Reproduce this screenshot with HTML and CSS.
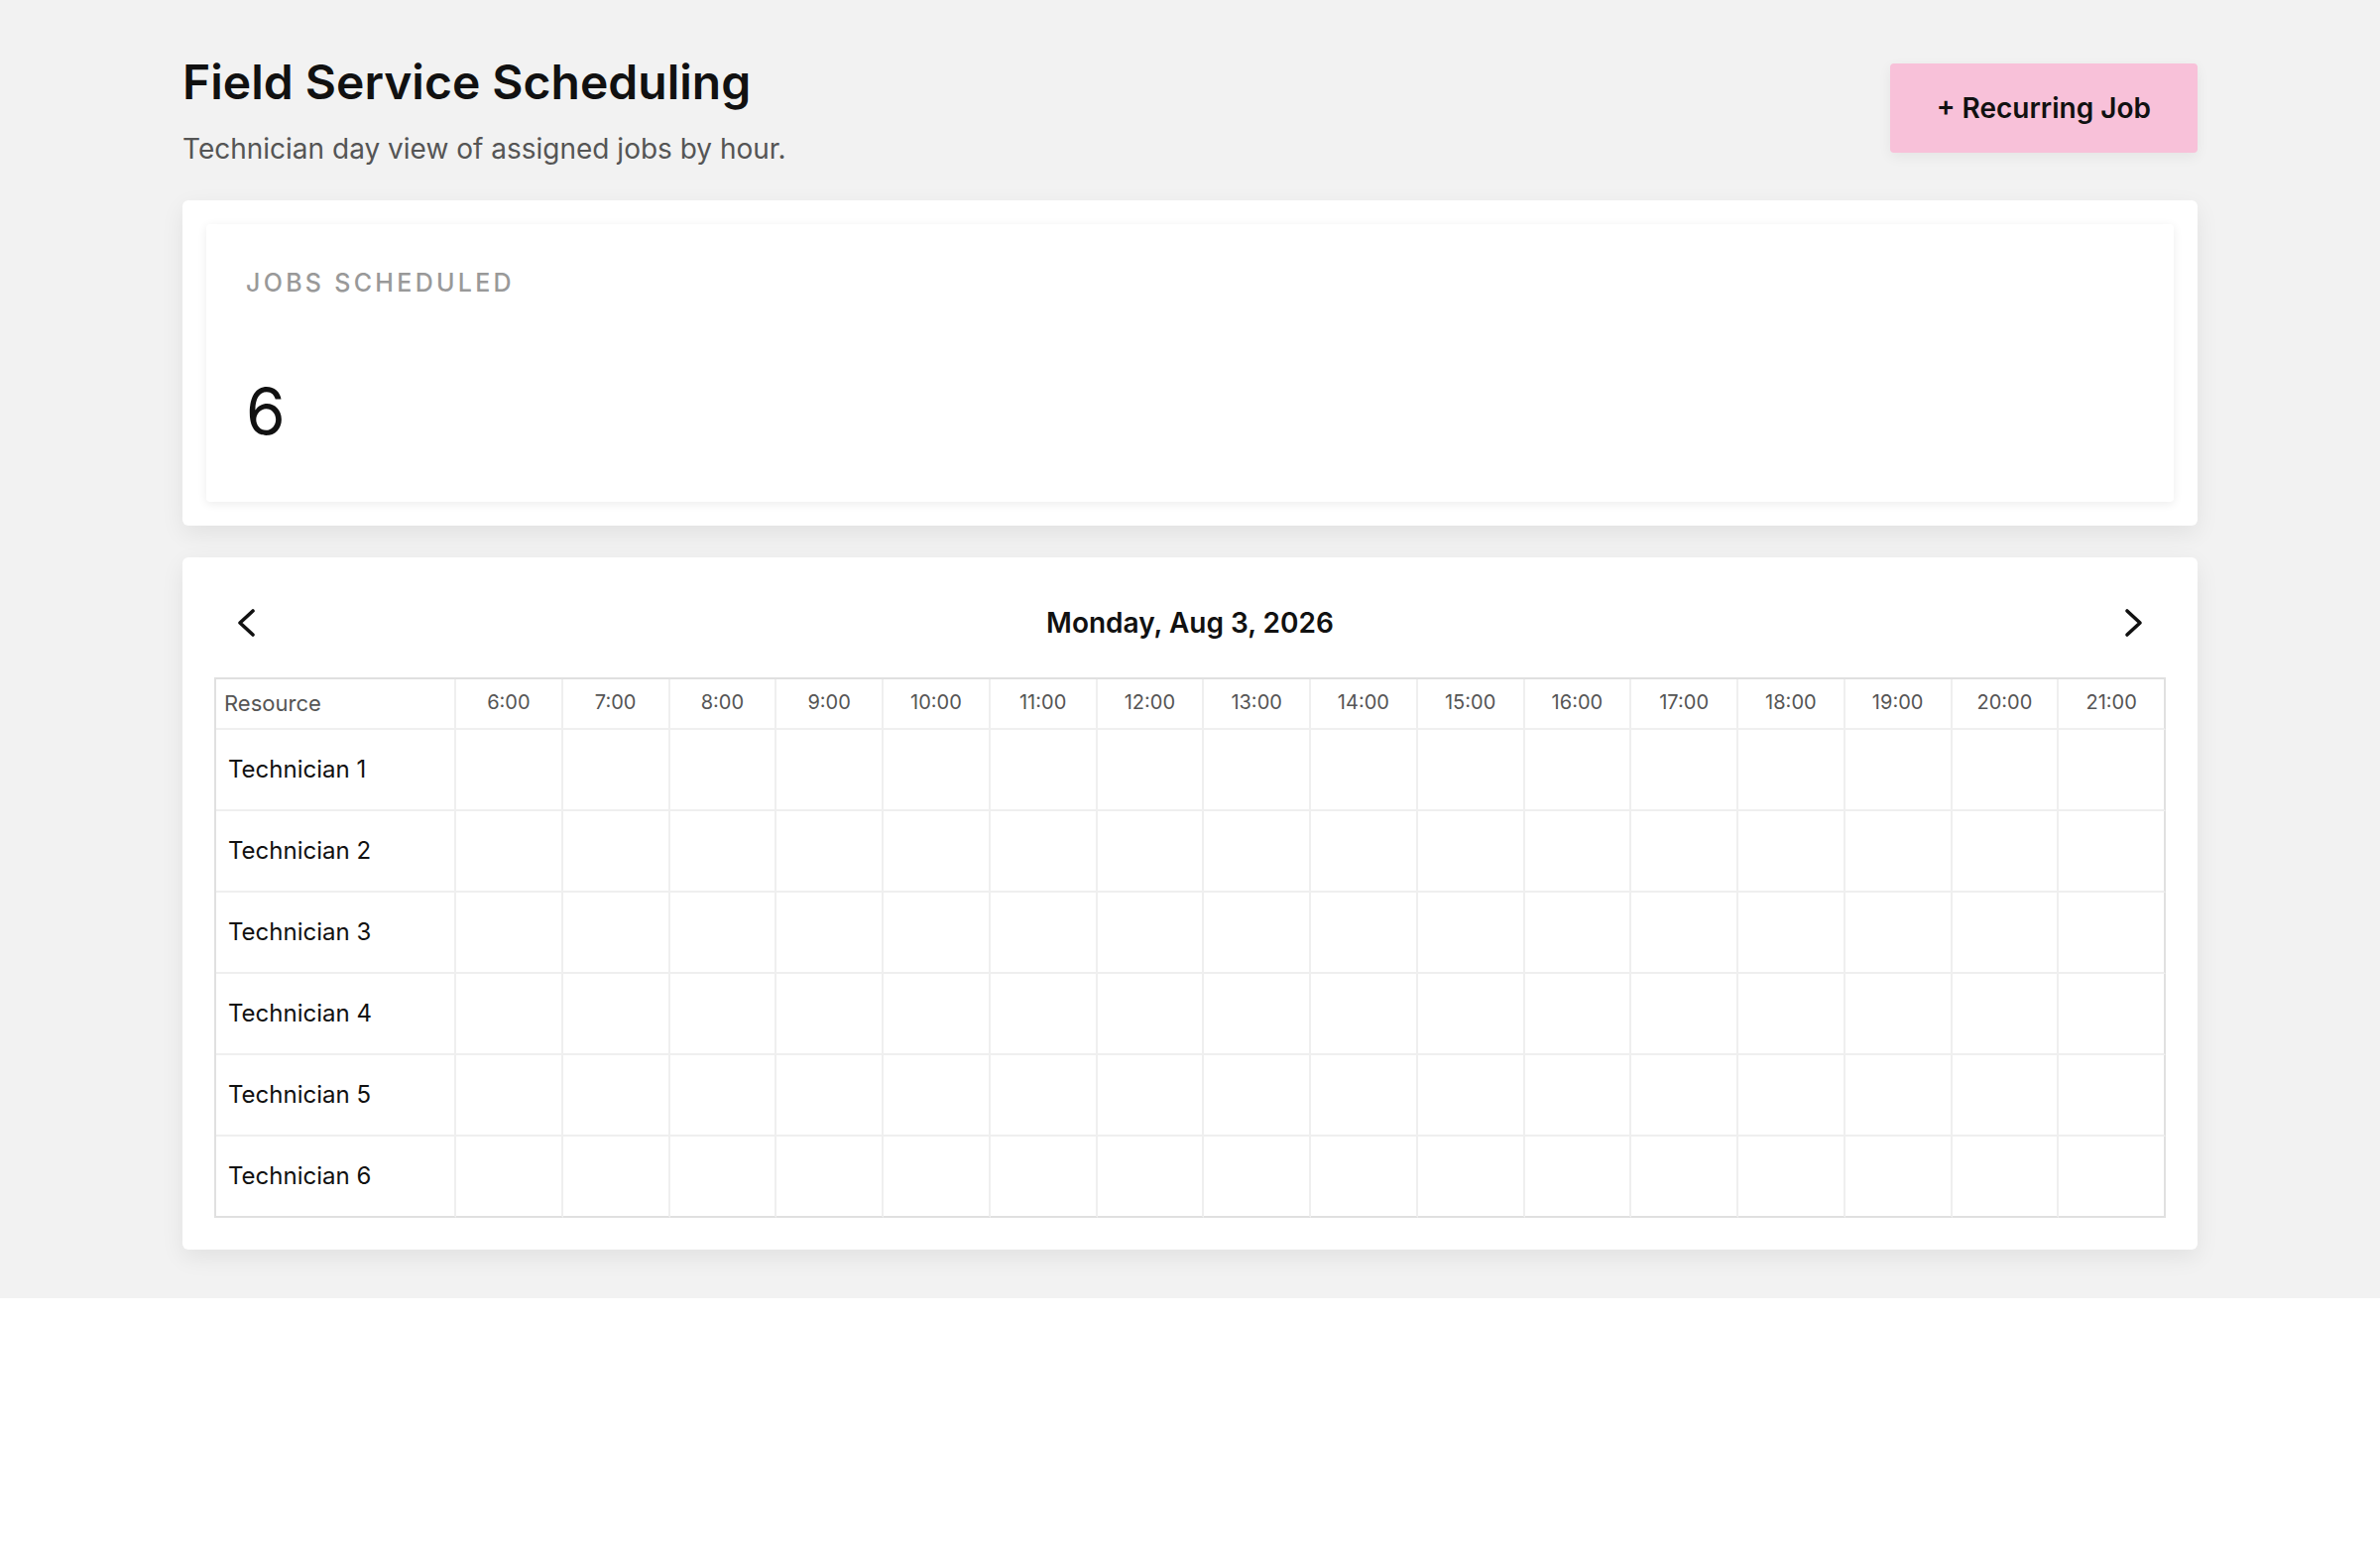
FILE: index.html
```html
<!DOCTYPE html>
<html lang="en">
	<head>
		<meta charset="UTF-8" />
		<meta name="viewport" content="width=device-width, initial-scale=1.0" />
		<title>Field Service Scheduling</title>
		<link rel="stylesheet" href="styles.css">
	</head>
	<body>
		<div class="page">
			<div class="header">
				<div>
					<h1>Field Service Scheduling</h1>
					<p class="sub">Technician day view of assigned jobs by hour.</p>
				</div>
				<button class="add">+ Recurring Job</button>
			</div>

			<div class="card">
				<div class="stat">
					<div class="stat-label">Jobs Scheduled</div>
					<div class="stat-value">6</div>
				</div>
			</div>

			<div class="card sched">
				<div class="nav">
					<button class="arrow" aria-label="Previous day">
						<svg width="48" height="48" viewBox="0 0 24 24"><path d="M15.5 6 L9 12 L15.5 18" /></svg>
					</button>
					<div class="date">Monday, Aug 3, 2026</div>
					<button class="arrow" aria-label="Next day">
						<svg width="48" height="48" viewBox="0 0 24 24"><path d="M8.5 6 L15 12 L8.5 18" /></svg>
					</button>
				</div>
				<div class="grid">
					<div class="cell head res">Resource</div>
					<div class="cell head">6:00</div>
					<div class="cell head">7:00</div>
					<div class="cell head">8:00</div>
					<div class="cell head">9:00</div>
					<div class="cell head">10:00</div>
					<div class="cell head">11:00</div>
					<div class="cell head">12:00</div>
					<div class="cell head">13:00</div>
					<div class="cell head">14:00</div>
					<div class="cell head">15:00</div>
					<div class="cell head">16:00</div>
					<div class="cell head">17:00</div>
					<div class="cell head">18:00</div>
					<div class="cell head">19:00</div>
					<div class="cell head">20:00</div>
					<div class="cell head">21:00</div>
				</div>
			</div>
		</div>
		<script>
			// fill technician rows
			var grid = document.querySelector(".grid");
			for (var t = 1; t <= 6; t++) {
				var html = '<div class="cell name">Technician ' + t + '</div>';
				for (var h = 6; h <= 21; h++) {
					html += '<div class="cell slot"></div>';
				}
				grid.insertAdjacentHTML("beforeend", html);
			}
		</script>
	</body>
</html>
```

FILE: styles.css
```css
html {
	background: #fff;
}
body {
	margin: 0;
	font-family: Inter, "Liberation Sans", sans-serif;
	color: #111;
}
.page {
	background: #f2f2f2;
	padding: 54px 184px 49px;
}

.header {
	display: flex;
	justify-content: space-between;
	align-items: flex-start;
	margin-bottom: 32px;
}
.header h1 {
	margin: 0;
	font-size: 48px;
	line-height: 1.2;
	font-weight: 600;
	color: #111;
}
.header .sub {
	margin: 19px 0 0;
	font-size: 28px;
	line-height: 1.4;
	color: #555;
}
.add {
	margin-top: 10px;
	height: 90px;
	padding: 0 47px;
	background: #f8c1d9;
	border: 0;
	border-radius: 4px;
	box-shadow: 0 4px 14px rgba(0, 0, 0, 0.06);
	font-family: inherit;
	font-size: 28px;
	font-weight: 600;
	color: #111;
}

.card {
	background: #fff;
	border-radius: 6px;
	padding: 24px;
	box-shadow: 0 8px 24px rgba(0, 0, 0, 0.07);
	margin-bottom: 32px;
}
.card:last-child {
	margin-bottom: 0;
}
.stat {
	border-radius: 4px;
	padding: 41px 40px 43px;
	box-shadow: 0 2px 10px rgba(0, 0, 0, 0.08);
}
.stat-label {
	font-size: 25px;
	line-height: 36px;
	font-weight: 500;
	letter-spacing: 3.3px;
	text-transform: uppercase;
	color: #999;
	margin-bottom: 64px;
}
.stat-value {
	font-size: 64px;
	line-height: 96px;
	color: #111;
}

.sched {
	padding: 34px 32px 32px;
}
.nav {
	display: flex;
	justify-content: space-between;
	align-items: center;
	height: 64px;
	margin-bottom: 23px;
}
.arrow {
	width: 64px;
	height: 64px;
	padding: 0;
	border: 0;
	background: none;
	display: flex;
	align-items: center;
	justify-content: center;
}
.arrow path {
	fill: none;
	stroke: #111;
	stroke-width: 1.8;
	stroke-linecap: round;
	stroke-linejoin: round;
}
.date {
	font-size: 28px;
	font-weight: 600;
	color: #111;
}

.grid {
	display: grid;
	grid-template-columns: 242px repeat(16, 1fr);
	grid-template-rows: 51px;
	grid-auto-rows: 82px;
	border: 2px solid #e0e0e0;
	border-right: 0;
	border-bottom: 0;
}
.cell {
	border-right: 2px solid #efefef;
	border-bottom: 2px solid #efefef;
	display: flex;
	align-items: center;
}
.cell:nth-child(17n) {
	border-right-color: #e0e0e0;
}
.cell:nth-last-child(-n+17) {
	border-bottom-color: #e0e0e0;
}
.cell.head {
	justify-content: center;
	padding-bottom: 3px;
	font-size: 20px;
	color: #555;
}
.cell.head.res {
	justify-content: flex-start;
	padding-left: 8px;
	padding-bottom: 1px;
	font-size: 22px;
}
.cell.name {
	padding-left: 12px;
	font-size: 24px;
	color: #111;
}
```
